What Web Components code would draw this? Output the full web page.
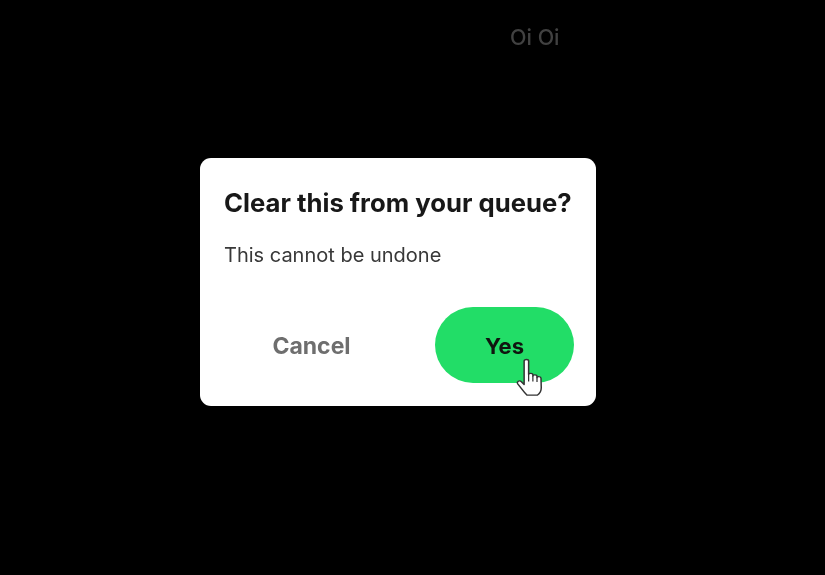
<!DOCTYPE html>
<html>
<head>
<meta charset="utf-8">
<title>Clear queue</title>
<style>
  html, body { margin: 0; padding: 0; background: #000; }
  body { width: 825px; height: 575px; overflow: hidden; font-family: Inter, "Liberation Sans", sans-serif; }
</style>
</head>
<body>
<player-backdrop>
  <span slot="label">Oi Oi</span>
  <confirm-dialog heading="Clear this from your queue?" message="This cannot be undone">
    <pill-button slot="actions" kind="plain">Cancel</pill-button>
    <pill-button slot="actions" kind="primary" hover>Yes</pill-button>
  </confirm-dialog>
</player-backdrop>
<script>
class PlayerBackdrop extends HTMLElement {
  constructor() {
    super();
    this.attachShadow({ mode: 'open' });
    this.shadowRoot.innerHTML = `
      <style>
        :host { display: block; position: relative; width: 825px; height: 575px; background: #000; }
        .label { padding: 25px 0 0 510px; font-size: 21.5px; line-height: 24px; font-weight: 500; color: #414141; filter: blur(.6px); }
        .overlay { position: absolute; inset: 0; padding: 158px 0 0 200px; box-sizing: border-box; filter: blur(.3px); }
      </style>
      <div class="label"><slot name="label"></slot></div>
      <div class="overlay"><slot></slot></div>
    `;
  }
}

class ConfirmDialog extends HTMLElement {
  constructor() {
    super();
    this.attachShadow({ mode: 'open' });
    this.shadowRoot.innerHTML = `
      <style>
        :host { display: block; width: 396px; height: 248px; box-sizing: border-box; padding: 28px 22px 23px 24px; background: #fff; border-radius: 11px; }
        h1 { margin: 0; font-size: 25.7px; line-height: 34px; font-weight: 700; color: #181818; white-space: nowrap; }
        p { margin: 22px 0 0; font-size: 20px; line-height: 26px; font-weight: 400; color: #383838; white-space: nowrap; }
        .actions { display: flex; justify-content: flex-end; align-items: center; gap: 54px; margin-top: 39px; }
      </style>
      <h1></h1>
      <p></p>
      <div class="actions"><slot name="actions"></slot></div>
    `;
  }

  connectedCallback() {
    this.shadowRoot.querySelector('h1').textContent = this.getAttribute('heading');
    this.shadowRoot.querySelector('p').textContent = this.getAttribute('message');
  }
}

class PillButton extends HTMLElement {
  constructor() {
    super();
    this.attachShadow({ mode: 'open' });
    this.shadowRoot.innerHTML = `
      <style>
        :host { display: block; position: relative; width: 139px; height: 76px; border-radius: 38px; font-size: 23px; font-weight: 700; }
        :host([kind="primary"]) { background: #22dd67; color: #101510; font-size: 22px; }
        :host([kind="plain"]) { color: #6e6e6e; }
        .text { display: flex; align-items: center; justify-content: center; height: 100%; padding-top: 1px; box-sizing: border-box; }
        svg { position: absolute; left: 81px; top: 50px; }
      </style>
      <div class="text"><slot></slot></div>
    `;
  }

  connectedCallback() {
    if (this.hasAttribute('hover')) {
      this.shadowRoot.innerHTML += `
        <svg width="35" height="43" viewBox="0 0 28 38.500" preserveAspectRatio="none">
          <path d="M6.5 3.500c0-1.700 3.600-1.700 3.600 0v12.200c0-1.500 3.400-1.500 3.400.2v1.200c0-1.500 3.300-1.500 3.300.3v1.100c0-1.400 3.200-1.300 3.200.6l.2 8.500c0 3-1.500 5.500-3.200 6.600H8.900c-1.600-1.500-2.800-3.300-4.200-5.400L1.400 24c-1.100-2 1.400-3.600 2.900-1.900l2.200 2.600z" fill="#fff" stroke="#333" stroke-width="1.200" stroke-linejoin="round"/>
          <path d="M10.100 16v6M13.500 17v5M16.800 18.300v4" fill="none" stroke="#333" stroke-width="1"/>
        </svg>
      `;
    }
  }
}

customElements.define('player-backdrop', PlayerBackdrop);
customElements.define('confirm-dialog', ConfirmDialog);
customElements.define('pill-button', PillButton);
</script>
</body>
</html>
